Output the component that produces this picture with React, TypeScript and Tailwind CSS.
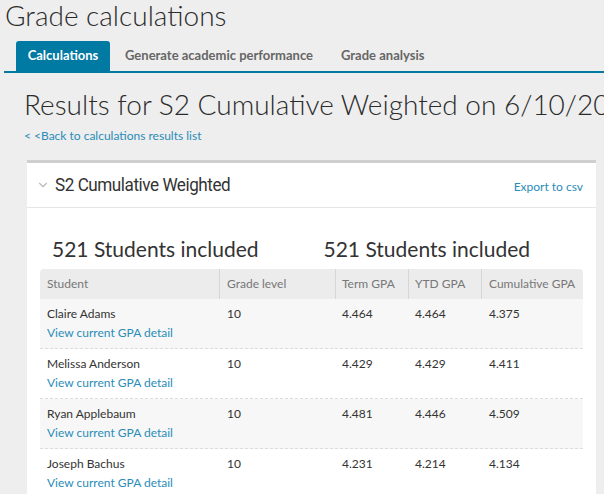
import { ChevronDown } from "lucide-react";

const rows = [
  { name: "Claire Adams", grade: "10", term: "4.464", ytd: "4.464", cum: "4.375" },
  { name: "Melissa Anderson", grade: "10", term: "4.429", ytd: "4.429", cum: "4.411" },
  { name: "Ryan Applebaum", grade: "10", term: "4.481", ytd: "4.446", cum: "4.509" },
  { name: "Joseph Bachus", grade: "10", term: "4.231", ytd: "4.214", cum: "4.134" },
];

export default function App() {
  return (
    <div className="h-[494px] w-[604px] overflow-hidden bg-[#eeeeee] font-['Lato',sans-serif] text-[#333]">
      <h1 className="pt-[1px] pl-[5px] text-[28px] leading-[29px] font-light whitespace-nowrap text-[#2b2b2b]">Grade calculations</h1>

      <div className="mt-[11px] ml-[4px] flex items-end border-b-2 border-[#0079a3] pl-[12px]">
        <div className="flex h-[30px] w-[94px] items-center justify-center rounded-t-[3px] bg-[#0079a3] text-[13px] font-bold text-white">
          Calculations
        </div>
        <div className="flex h-[30px] items-center pl-[15px] text-[13px] font-bold text-[#666]">
          Generate academic performance
        </div>
        <div className="flex h-[30px] items-center pl-[28px] text-[13px] font-bold text-[#666]">
          Grade analysis
        </div>
      </div>

      <div className="pl-[24px]">
        <h2 className="mt-[14px] text-[28px] leading-[34px] font-light whitespace-nowrap text-[#2b2b2b]">
          Results for S2 Cumulative Weighted on 6/10/2017
        </h2>
        <a className="mt-[6px] block text-[12px] text-[#2a8cb8]">&lt; &lt;Back to calculations results list</a>
      </div>

      <div className="mt-[15px] ml-[27px] w-[569px] border-t-[3px] border-[#cfcfcf] bg-white">
        <div className="flex h-[45px] items-center justify-between border-b border-[#e6e6e6] pr-[13px] pl-[9px]">
          <div className="flex items-center">
            <ChevronDown className="h-[14px] w-[14px] text-[#bbb]" strokeWidth={2} />
            <span className="ml-[5px] origin-left scale-x-[0.9] font-['Liberation_Sans_Narrow','Roboto',sans-serif] text-[19px] tracking-[-0.5px] text-[#333]">
              S2 Cumulative Weighted
            </span>
          </div>
          <a className="mt-[4px] text-[12px] text-[#2a8cb8]">Export to csv</a>
        </div>

        <div className="px-[13px] pt-[27px]">
          <div className="grid grid-cols-2">
            <div className="pl-[12px] text-[21px] leading-[28px]">521 Students included</div>
            <div className="pl-[12px] text-[21px] leading-[28px]">521 Students included</div>
          </div>

          <div className="mt-[6px]">
            <div className="flex h-[30px] rounded-t-[4px] bg-[#ececec] text-[12px] text-[#777]">
              <div className="flex w-[180px] items-center border-r border-[#d6d6d6] pl-[7px]">Student</div>
              <div className="flex w-[116px] items-center border-r border-[#d6d6d6] pl-[7px]">Grade level</div>
              <div className="flex w-[73px] items-center border-r border-[#d6d6d6] pl-[6px]">Term GPA</div>
              <div className="flex w-[73px] items-center border-r border-[#d6d6d6] pl-[6px]">YTD GPA</div>
              <div className="flex flex-1 items-center pl-[7px]">Cumulative GPA</div>
            </div>
            {rows.map((r, i) => (
              <div
                key={r.name}
                className={`flex h-[50px] border-b border-dashed border-[#dcdcdc] text-[12px] ${i % 2 === 0 ? "bg-[#f7f7f7]" : "bg-white"}`}
              >
                <div className="w-[180px] pt-[5px] pl-[7px] leading-[19px]">
                  <div>{r.name}</div>
                  <a className="block text-[#2a8cb8]">View current GPA detail</a>
                </div>
                <div className="w-[116px] pt-[5px] pl-[7px] leading-[19px]">{r.grade}</div>
                <div className="w-[73px] pt-[5px] pl-[6px] leading-[19px]">{r.term}</div>
                <div className="w-[73px] pt-[5px] pl-[6px] leading-[19px]">{r.ytd}</div>
                <div className="flex-1 pt-[5px] pl-[7px] leading-[19px]">{r.cum}</div>
              </div>
            ))}
          </div>
        </div>
      </div>
    </div>
  );
}
